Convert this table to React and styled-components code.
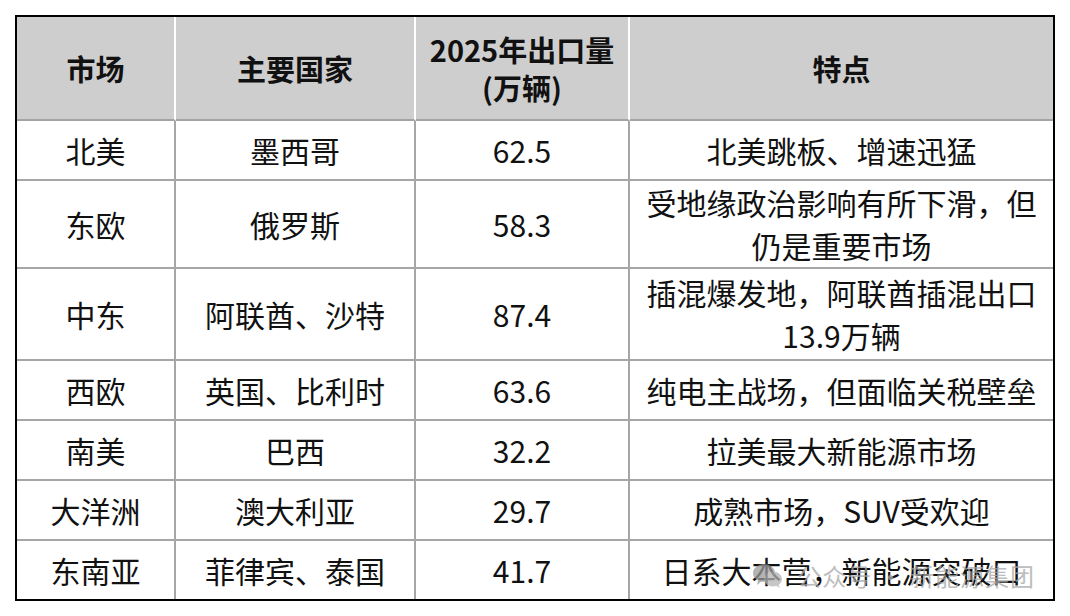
import styled, { createGlobalStyle } from 'styled-components';

const GlobalStyle = createGlobalStyle`
  html, body {
    margin: 0;
    padding: 0;
    background: #ffffff;
  }
  body {
    font-family: 'Noto Sans CJK SC', 'Noto Sans', sans-serif;
  }
`;

const headers = [['市场'], ['主要国家'], ['2025年出口量', '(万辆)'], ['特点']];

const rows = [
  { height: 60, cells: [['北美'], ['墨西哥'], ['62.5'], ['北美跳板、增速迅猛']] },
  { height: 88, cells: [['东欧'], ['俄罗斯'], ['58.3'], ['受地缘政治影响有所下滑，但', '仍是重要市场']] },
  { height: 92, cells: [['中东'], ['阿联酋、沙特'], ['87.4'], ['插混爆发地，阿联酋插混出口', '13.9万辆']] },
  { height: 60, cells: [['西欧'], ['英国、比利时'], ['63.6'], ['纯电主战场，但面临关税壁垒']] },
  { height: 60, cells: [['南美'], ['巴西'], ['32.2'], ['拉美最大新能源市场']] },
  { height: 60, cells: [['大洋洲'], ['澳大利亚'], ['29.7'], ['成熟市场，SUV受欢迎']] },
  { height: 58, cells: [['东南亚'], ['菲律宾、泰国'], ['41.7'], ['日系大本营，新能源突破口']] },
];

function WeChatMark() {
  return (
    <svg width='30' height='26' viewBox='0 0 30 26'>
      <ellipse cx='11' cy='10' rx='11' ry='9' fill='#9a9a9a' />
      <path d='M5 17 L4 22 L9 18 Z' fill='#9a9a9a' />
      <ellipse cx='20' cy='16' rx='9' ry='7.5' fill='#b4b4b4' />
      <path d='M25 21 L27 25 L22 22 Z' fill='#b4b4b4' />
    </svg>
  );
}

function App() {
  return (
    <>
      <GlobalStyle />
      <Page>
        <Table>
          {headers.map((lines, i) => (
            <HeadCell key={i} $last={i === headers.length - 1}>
              {lines.map((l) => (
                <Line key={l}>{l}</Line>
              ))}
            </HeadCell>
          ))}
          {rows.map((row, r) =>
            row.cells.map((lines, c) => (
              <Cell
                key={r + '-' + c}
                $height={row.height}
                $last={c === row.cells.length - 1}
                $bottom={r === rows.length - 1}
              >
                {lines.map((l) => (
                  <Line key={l}>{l}</Line>
                ))}
              </Cell>
            ))
          )}
          <Watermark>
            <WeChatMark />
            <span>公众号 · 新能源集团</span>
          </Watermark>
        </Table>
      </Page>
    </>
  );
}

const Page = styled.div`
  width: 1070px;
  height: 616px;
  padding: 15px 0 0 15px;
  box-sizing: border-box;
`;

const Table = styled.div`
  position: relative;
  width: 1040px;
  box-sizing: border-box;
  border: 2px solid #000;
  display: grid;
  grid-template-columns: 159px 240px 214px 1fr;
  grid-auto-rows: auto;
  color: #111;
`;

const HeadCell = styled.div`
  height: 104px;
  box-sizing: border-box;
  background: #cecece;
  border-right: ${({ $last }) => ($last ? 'none' : '2px solid #ffffff')};
  border-bottom: 2px solid #a3a3a3;
  display: flex;
  flex-direction: column;
  align-items: center;
  justify-content: center;
  font-size: 29px;
  font-weight: 700;
  line-height: 38px;
  color: #111;
`;

const Cell = styled.div`
  height: ${({ $height }) => $height}px;
  box-sizing: border-box;
  border-right: ${({ $last }) => ($last ? 'none' : '2px solid #a6a6a6')};
  border-bottom: ${({ $bottom }) => ($bottom ? 'none' : '2px solid #a6a6a6')};
  display: flex;
  flex-direction: column;
  align-items: center;
  justify-content: center;
  padding: 0 8px;
  font-size: 30px;
  font-weight: 400;
  line-height: 43px;
  text-align: center;
`;

const Line = styled.div`
  white-space: nowrap;
`;

const Watermark = styled.div`
  position: absolute;
  right: 18px;
  bottom: 6px;
  display: flex;
  align-items: center;
  gap: 14px;
  pointer-events: none;
  opacity: 0.75;
  span {
    font-size: 24px;
    color: #a8a8a8;
    letter-spacing: 1px;
  }
`;

export default App;
